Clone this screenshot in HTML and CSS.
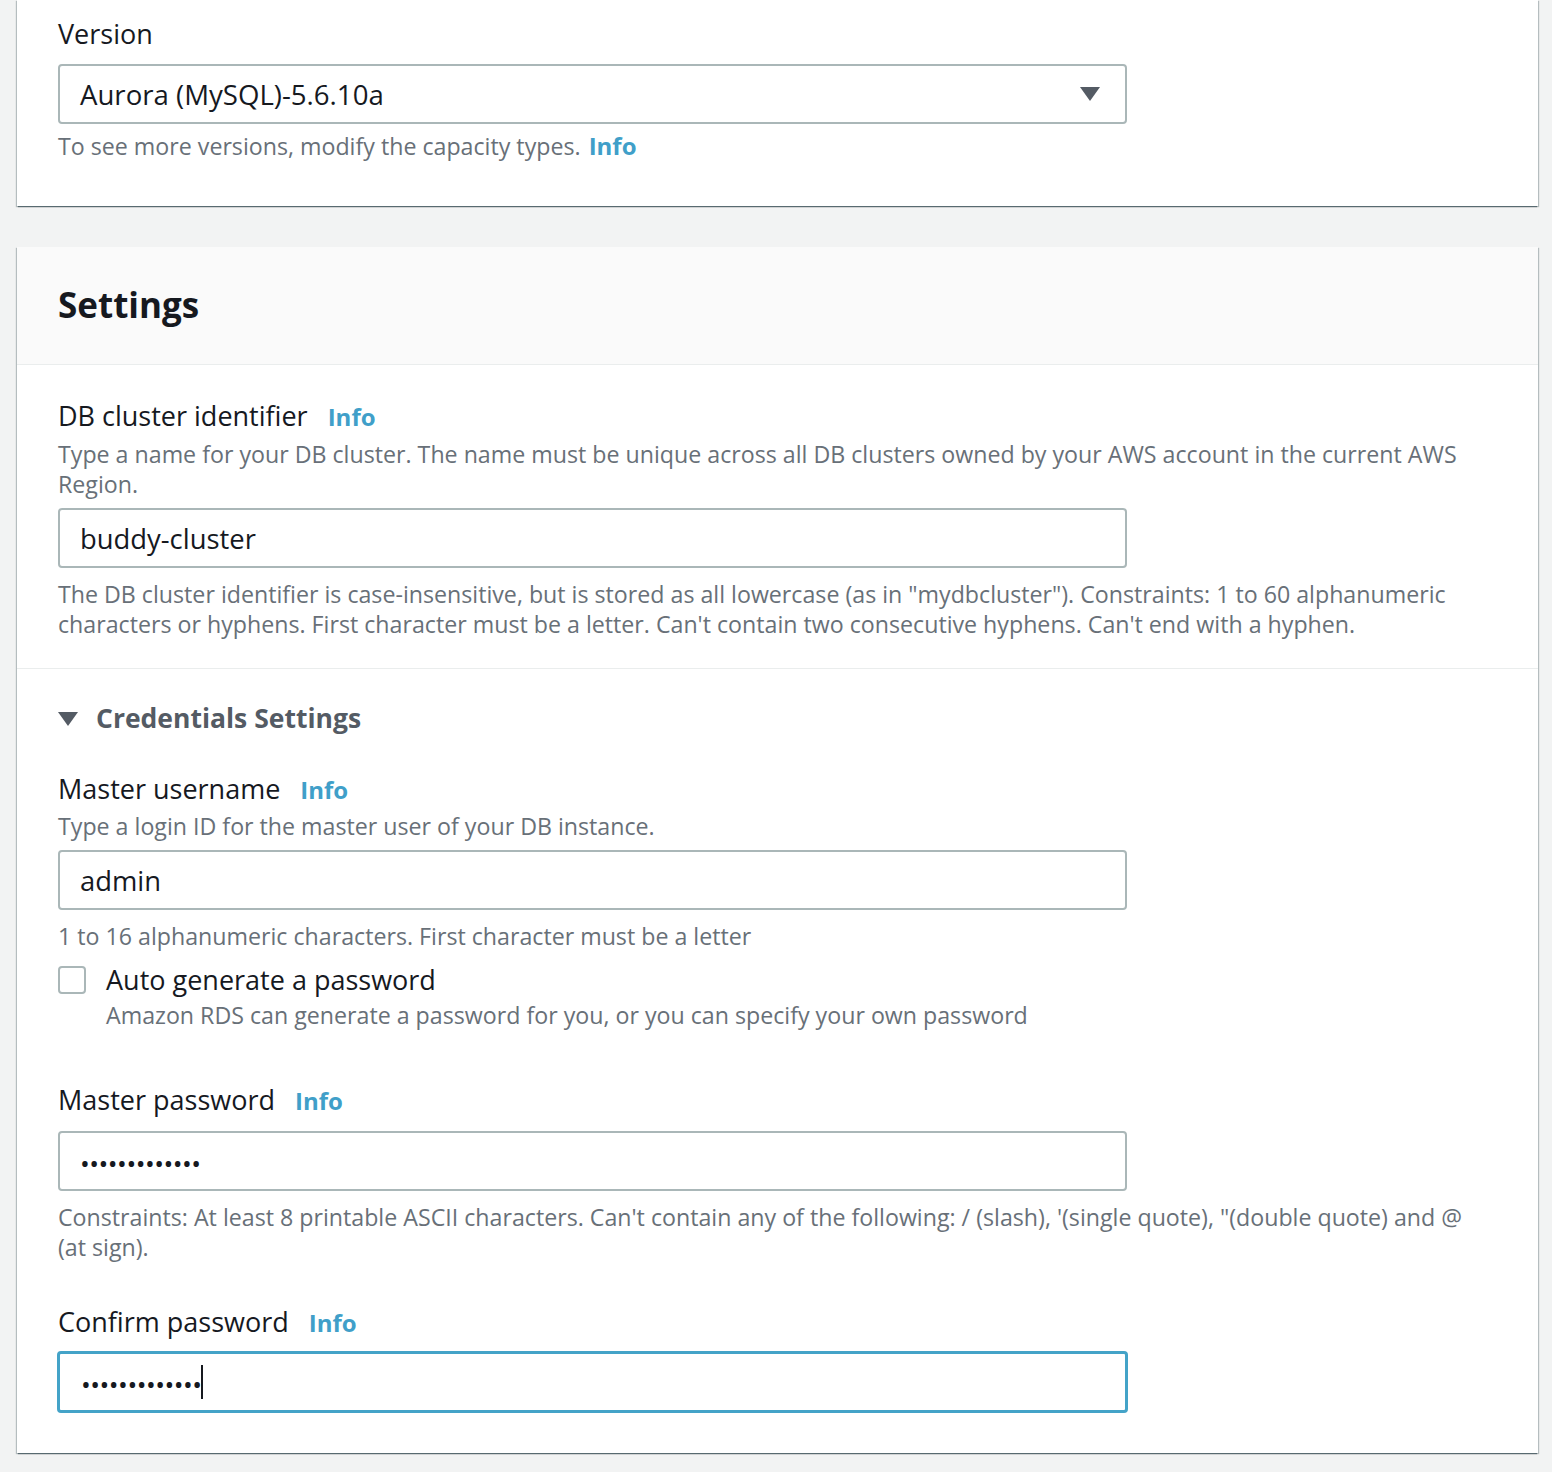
FILE: index.html
```html
<!DOCTYPE html>
<html lang="en">
<head>
<meta charset="utf-8">
<title>Settings</title>
<link rel="stylesheet" href="styles.css">
</head>
<body>
<div class="page">
  <section class="card card-top">
    <div class="field">
      <div class="label">Version</div>
      <div class="select">
        <span class="select-value">Aurora (MySQL)-5.6.10a</span>
        <svg class="select-arrow" width="22" height="16" viewBox="0 0 22 16"><polygon points="1,1 21,1 11,15" fill="#545b64"/></svg>
      </div>
      <div class="hint">To see more versions, modify the capacity types. <a class="info inline">Info</a></div>
    </div>
  </section>

  <section class="card card-settings">
    <header class="card-header">
      <h2 class="card-title">Settings</h2>
    </header>
    <div class="card-section">
      <div class="label">DB cluster identifier <a class="info">Info</a></div>
      <div class="desc">Type a name for your DB cluster. The name must be unique across all DB clusters owned by your AWS account in the current AWS Region.</div>
      <div class="input">buddy-cluster</div>
      <div class="hint hint-after">The DB cluster identifier is case-insensitive, but is stored as all lowercase (as in "mydbcluster"). Constraints: 1 to 60 alphanumeric characters or hyphens. First character must be a letter. Can't contain two consecutive hyphens. Can't end with a hyphen.</div>
    </div>
    <div class="card-section section-creds">
      <div class="expander">
        <svg class="expander-icon" width="22" height="16" viewBox="0 0 22 16"><polygon points="1,1 21,1 11,15" fill="#545b64"/></svg>
        <span class="expander-title">Credentials Settings</span>
      </div>

      <div class="label label-user">Master username <a class="info">Info</a></div>
      <div class="desc desc-user">Type a login ID for the master user of your DB instance.</div>
      <div class="input">admin</div>
      <div class="hint hint-after">1 to 16 alphanumeric characters. First character must be a letter</div>

      <div class="checkbox-row">
        <span class="checkbox"></span>
        <div class="checkbox-text">
          <div class="checkbox-label">Auto generate a password</div>
          <div class="desc">Amazon RDS can generate a password for you, or you can specify your own password</div>
        </div>
      </div>

      <div class="label label-pass">Master password <a class="info">Info</a></div>
      <div class="input input-pass"><span class="dots">•••••••••••••</span></div>
      <div class="hint hint-after">Constraints: At least 8 printable ASCII characters. Can't contain any of the following: / (slash), '(single quote), "(double quote) and @ (at sign).</div>

      <div class="label label-confirm">Confirm password <a class="info">Info</a></div>
      <div class="input input-pass input-focus"><span class="dots">•••••••••••••</span><span class="caret"></span></div>
    </div>
  </section>
</div>
</body>
</html>
```

FILE: styles.css
```css
* { box-sizing: border-box; }

html, body {
  margin: 0;
  padding: 0;
  background: #f2f3f3;
}

body {
  font-family: "Open Sans", "Noto Sans", sans-serif;
  color: #16191f;
}

.page {
  padding: 0 14px 19px 17px;
  display: flex;
  flex-direction: column;
  gap: 41px;
}

.card {
  background: #fff;
  box-shadow: 0 2px 1px -1px rgba(0, 28, 36, 0.35), 1px 1px 1px 0 rgba(0, 28, 36, 0.25), -1px 1px 1px 0 rgba(0, 28, 36, 0.25);
}

.card-top {
  padding: 14px 46px 45px 41px;
}

.label {
  font-size: 27px;
  line-height: 40px;
  color: #16191f;
  display: flex;
  align-items: baseline;
}

.info {
  color: #409fc9;
  font-weight: 700;
  font-size: 24px;
  margin-left: 20px;
  text-decoration: none;
}

.info.inline {
  margin-left: 2px;
}

.select {
  margin-top: 10px;
  width: 1069px;
  height: 60px;
  border: 2px solid #aab7b8;
  border-radius: 4px;
  display: flex;
  align-items: center;
  justify-content: space-between;
  padding: 0 24px 0 20px;
}

.select-value {
  font-size: 27.6px;
  color: #16191f;
}

.select-arrow { display: block; }

.hint, .desc {
  font-size: 23.2px;
  line-height: 30px;
  color: #687078;
}

.hint {
  margin-top: 7px;
}

.card-header {
  background: #fafafa;
  border-bottom: 1px solid #eaeded;
  padding: 36px 41px 37px;
}

.card-title {
  margin: 0;
  font-size: 35px;
  line-height: 44px;
  font-weight: 700;
  color: #16191f;
}

.card-section {
  padding: 31px 46px 29px 41px;
}

.card-section + .card-section {
  border-top: 1px solid #eaeded;
}

.card-section > .desc {
  margin-top: 2px;
}

.card-section > .desc-user {
  margin-top: 1px;
}

.input {
  margin-top: 9px;
  width: 1069px;
  height: 60px;
  border: 2px solid #aab7b8;
  border-radius: 4px;
  padding: 0 20px;
  display: flex;
  align-items: center;
  font-size: 27.4px;
  color: #16191f;
}

.hint-after {
  margin-top: 11px;
}

.section-creds {
  padding-top: 29px;
  padding-bottom: 40px;
}

.expander {
  display: flex;
  align-items: center;
  gap: 17px;
  height: 40px;
}

.expander-icon { display: block; margin-top: 1px; margin-left: -1px; }

.expander-title {
  font-size: 26.5px;
  font-weight: 700;
  color: #545b64;
}

.label-user { margin-top: 31px; }

.checkbox-row {
  display: flex;
  align-items: flex-start;
  gap: 20px;
  margin-top: 9px;
}

.checkbox {
  width: 28px;
  height: 28px;
  border: 2px solid #aab7b8;
  border-radius: 4px;
  background: #fff;
  margin-top: 6px;
  flex: none;
}

.checkbox-label {
  font-size: 27px;
  line-height: 40px;
  color: #16191f;
}

.label-pass { margin-top: 50px; }

.input-pass {
  margin-top: 10px;
}

.dots {
  font-size: 26px;
  letter-spacing: -0.5px;
  color: #16191f;
  padding-top: 4px;
}

.label-confirm { margin-top: 40px; }

.input-focus {
  margin-top: 8px;
  width: 1071px;
  height: 62px;
  margin-left: -1px;
  border: 3px solid #44a3c8;
  padding-left: 21px;
}

.caret {
  display: inline-block;
  width: 2px;
  height: 34px;
  background: #16191f;
  margin-left: -1px;
}
```
